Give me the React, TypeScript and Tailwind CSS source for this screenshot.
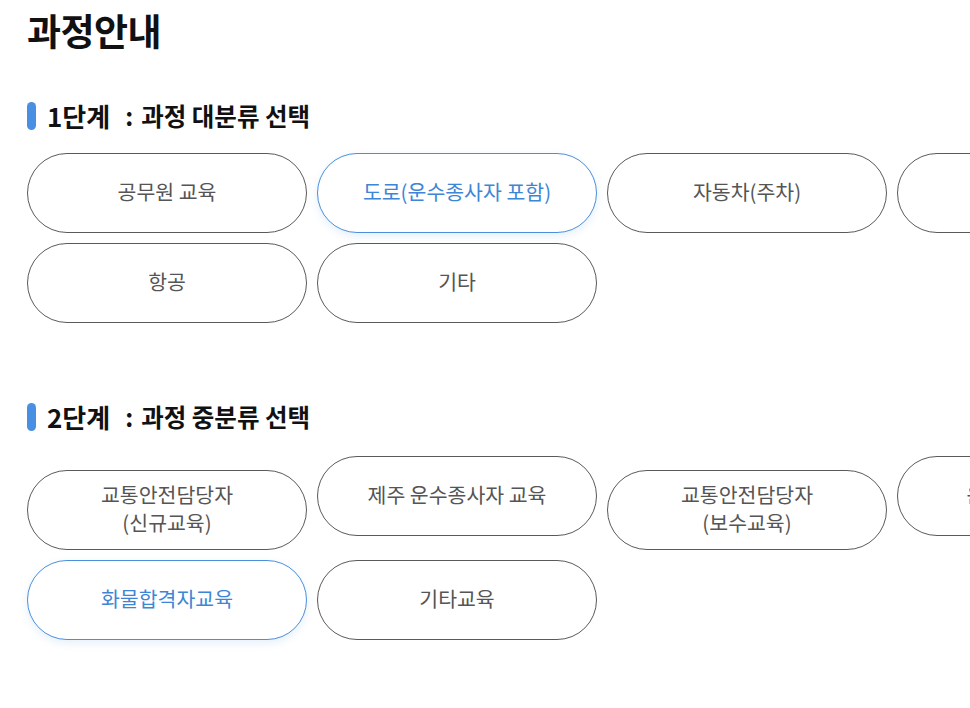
import React from "react";

type Item = { label: string[]; active?: boolean };

const step1: Item[] = [
  { label: ["공무원 교육"] },
  { label: ["도로(운수종사자 포함)"], active: true },
  { label: ["자동차(주차)"] },
  { label: ["철도"] },
  { label: ["항공"] },
  { label: ["기타"] },
];

const step2: Item[] = [
  { label: ["교통안전담당자", "(신규교육)"] },
  { label: ["제주 운수종사자 교육"] },
  { label: ["교통안전담당자", "(보수교육)"] },
  { label: ["운수종사자  교육"] },
  { label: ["화물합격자교육"], active: true },
  { label: ["기타교육"] },
];

function Pill({ item }: { item: Item }) {
  return (
    <div
      className={
        item.active
          ? "w-[280px] h-[80px] shrink-0 rounded-full border border-[#4a8fdc] bg-white text-[#3d86d6] shadow-[0_3px_8px_rgba(74,143,220,0.14)] flex flex-col items-center justify-center pb-[4px] text-center text-[20.5px] leading-[28px]"
          : "w-[280px] h-[80px] shrink-0 rounded-full border border-[#5a5a5a] bg-white text-[#555555] flex flex-col items-center justify-center pb-[4px] text-center text-[20.5px] leading-[28px]"
      }
    >
      {item.label.map((l, i) => (
        <span key={i} className="block whitespace-pre">
          {l}
        </span>
      ))}
    </div>
  );
}

function Heading({ num, rest }: { num: string; rest: string }) {
  return (
    <div className="flex items-center h-[28px]">
      <span className="w-[9px] h-[28px] rounded-full bg-[#4a90e2] shrink-0" />
      <span className="ml-[11px] text-[26px] font-bold text-[#111111] leading-[28px] whitespace-nowrap">
        {num}
      </span>
      <span className="ml-[15px] text-[24.5px] font-bold text-[#111111] leading-[28px] whitespace-nowrap">
        :
      </span>
      <span className="ml-[8px] text-[24.5px] font-bold text-[#111111] leading-[28px] whitespace-nowrap">
        {rest}
      </span>
    </div>
  );
}

export default function App() {
  return (
    <div
      className="w-[970px] h-[708px] overflow-hidden bg-white"
      style={{ fontFamily: '"Noto Sans CJK KR", "Noto Sans", sans-serif' }}
    >
      <div className="pl-[27px] pt-[6px]">
        <h1 className="text-[37px] font-bold leading-[48px] text-[#111111] tracking-[-0.5px]">
          과정안내
        </h1>
        <div className="mt-[48px]">
          <Heading num="1단계" rest="과정 대분류 선택" />
          <div className="mt-[23px] w-[1160px] flex flex-wrap gap-[10px] items-baseline">
            {step1.map((it, i) => (
              <Pill key={i} item={it} />
            ))}
          </div>
        </div>
        <div className="mt-[80px]">
          <Heading num="2단계" rest="과정 중분류 선택" />
          <div className="mt-[25px] w-[1160px] flex flex-wrap gap-[10px] items-baseline">
            {step2.map((it, i) => (
              <Pill key={i} item={it} />
            ))}
          </div>
        </div>
      </div>
    </div>
  );
}
